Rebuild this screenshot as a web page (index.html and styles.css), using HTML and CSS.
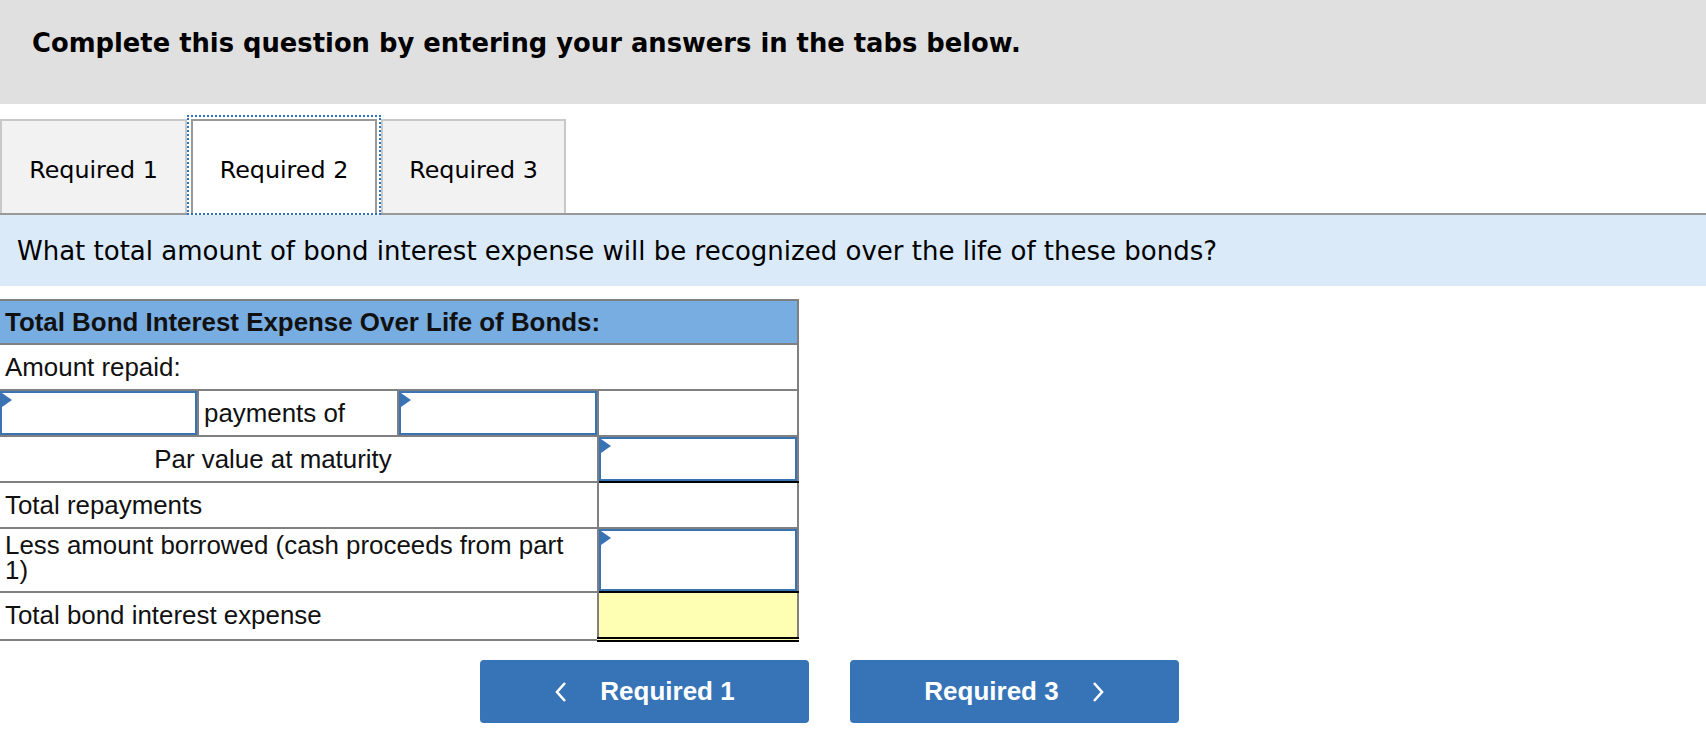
FILE: index.html
```html
<!DOCTYPE html>
<html lang="en">
<head>
<meta charset="utf-8">
<title>Required 2</title>
<link rel="stylesheet" href="styles.css">
</head>
<body>
<div class="header">
  <h1 class="prompt">Complete this question by entering your answers in the tabs below.</h1>
</div>
<div class="tabs">
  <div class="tab">Required 1</div>
  <div class="tab tab-active"><div class="tab-inner">Required 2</div></div>
  <div class="tab tab-last">Required 3</div>
</div>
<div class="question">What total amount of bond interest expense will be recognized over the life of these bonds?</div>
<table class="sheet">
  <colgroup>
    <col class="c1"><col class="c2"><col class="c3"><col class="c4">
  </colgroup>
  <tr class="head-row"><th colspan="4">Total Bond Interest Expense Over Life of Bonds:</th></tr>
  <tr><td colspan="4">Amount repaid:</td></tr>
  <tr>
    <td class="in"><div class="field"></div></td>
    <td>payments of</td>
    <td class="in"><div class="field"></div></td>
    <td></td>
  </tr>
  <tr>
    <td colspan="3" class="center">Par value at maturity</td>
    <td class="in sum"><div class="field"></div></td>
  </tr>
  <tr>
    <td colspan="3">Total repayments</td>
    <td></td>
  </tr>
  <tr class="tall-row">
    <td colspan="3" class="two-line"><span class="wrap">Less amount borrowed (cash proceeds from part 1)</span></td>
    <td class="in sum"><div class="field field-tall"></div></td>
  </tr>
  <tr>
    <td colspan="3">Total bond interest expense</td>
    <td class="total"></td>
  </tr>
</table>
<div class="nav">
  <button class="nav-btn" type="button"><svg class="chev" width="13" height="22" viewBox="0 0 13 22"><polyline points="11,2 3,11 11,20" fill="none" stroke="#fff" stroke-width="2.6"/></svg><span>Required 1</span></button>
  <button class="nav-btn" type="button"><span>Required 3</span><svg class="chev" width="13" height="22" viewBox="0 0 13 22"><polyline points="2,2 10,11 2,20" fill="none" stroke="#fff" stroke-width="2.6"/></svg></button>
</div>
</body>
</html>
```

FILE: styles.css
```css
html, body {
  margin: 0;
  padding: 0;
  background: #fff;
}
body {
  font-family: "DejaVu Sans", Verdana, sans-serif;
  color: #000;
}
.header {
  height: 104px;
  box-sizing: border-box;
  background: #e0e0e0;
  padding: 28px 0 0 32px;
}
.prompt {
  margin: 0;
  font-size: 25.8px;
  font-weight: bold;
  line-height: normal;
}
.tabs {
  margin-top: 15px;
  height: 94px;
  display: flex;
  border-bottom: 2px solid #999;
}
.tab {
  width: 187px;
  box-sizing: border-box;
  background: #f2f2f2;
  border: 2px solid #c8c8c8;
  border-bottom: none;
  display: flex;
  align-items: center;
  justify-content: center;
  padding-top: 5px;
  font-size: 23.8px;
}
.tab-last {
  width: 185px;
}
.tab-active {
  width: 194px;
  margin: -4px 0 -2px 0;
  padding: 2px 2px 0 2px;
  background: #fff;
  border: 2px dotted #2f72c4;
  display: flex;
  align-items: stretch;
  justify-content: stretch;
}
.tab-inner {
  flex: 1;
  border: 2px solid #999;
  border-bottom: none;
  display: flex;
  align-items: center;
  justify-content: center;
  padding-top: 5px;
}
.question {
  height: 71px;
  box-sizing: border-box;
  background: #daeaf8;
  padding: 21px 0 0 17px;
  font-size: 26px;
  line-height: normal;
}
.sheet {
  margin-top: 13px;
  border-collapse: collapse;
  table-layout: fixed;
  width: 798px;
  font-family: "Liberation Sans", Arial, sans-serif;
  font-size: 25.9px;
  color: #111;
}
.c1 { width: 198px; }
.c2 { width: 200px; }
.c3 { width: 200px; }
.c4 { width: 200px; }
.sheet th,
.sheet td {
  border: 2px solid #808080;
  padding: 0 5px;
  height: 44px;
  text-align: left;
  vertical-align: middle;
  line-height: normal;
}
.sheet tr > :first-child {
  border-left: none;
}
.sheet th {
  background: #78ade2;
  font-weight: bold;
  height: 42px;
}
.sheet td.center {
  text-align: center;
  padding-right: 56px;
}
.tall-row td {
  height: 62px;
}
.sheet td.two-line {
  line-height: 0.98;
  padding-bottom: 4px;
  height: 58px;
}
.wrap {
  display: block;
  max-width: 560px;
}
.sheet td.in {
  padding: 0;
}
.field {
  position: relative;
  height: 44px;
  box-sizing: border-box;
  border: 2px solid #3a73b4;
  background: #fff;
}
.field-tall {
  height: 62px;
}
.field::before {
  content: "";
  position: absolute;
  left: 0;
  top: 0;
  border-left: 10px solid #3a73b4;
  border-top: 7px solid transparent;
  border-bottom: 7px solid transparent;
}
.sheet td.sum {
  border-bottom: 2px solid #000;
}
.sheet td.total {
  background: #ffffb3;
  border-bottom: 5px double #000;
}
.nav {
  display: flex;
  gap: 41px;
  margin-top: 18px;
  padding-left: 480px;
}
.nav-btn {
  width: 329px;
  height: 63px;
  border: none;
  border-radius: 4px;
  background: #3674b7;
  color: #fff;
  font-family: "Liberation Sans", Arial, sans-serif;
  font-weight: bold;
  font-size: 26px;
  display: flex;
  align-items: center;
  justify-content: center;
  gap: 33px;
  padding: 0;
}
.chev {
  display: block;
}
```
